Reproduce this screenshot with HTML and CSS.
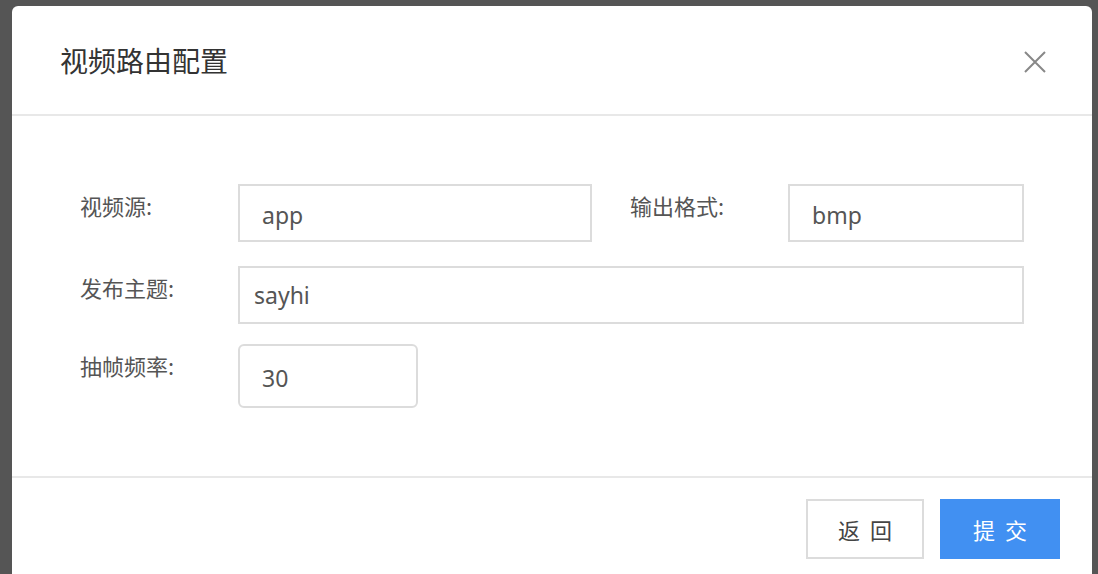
FILE: index.html
```html
<!DOCTYPE html>
<html lang="zh-CN">
<head>
<meta charset="utf-8">
<title>视频路由配置</title>
<link rel="stylesheet" href="styles.css">
</head>
<body>
<div class="modal">
  <div class="modal-header">
    <h2 class="modal-title">视频路由配置</h2>
    <button class="close" aria-label="关闭">
      <svg width="22" height="22" viewBox="0 0 22 22"><path d="M1 1 L21 21 M21 1 L1 21" stroke="#888" stroke-width="2" fill="none"/></svg>
    </button>
  </div>
  <div class="modal-body">
    <div class="row">
      <label class="label">视频源:</label>
      <div class="input w354">app</div>
      <label class="label">输出格式:</label>
      <div class="input w236">bmp</div>
    </div>
    <div class="row">
      <label class="label">发布主题:</label>
      <div class="input w786 tight">sayhi</div>
    </div>
    <div class="row last">
      <label class="label">抽帧频率:</label>
      <div class="input w180 round">30</div>
    </div>
  </div>
  <div class="modal-footer">
    <button class="btn btn-default">返回</button>
    <button class="btn btn-primary">提交</button>
  </div>
</div>
</body>
</html>
```
FILE: styles.css
```css
html, body {
  margin: 0;
  padding: 0;
}
body {
  background: #555555;
  width: 1098px;
  height: 574px;
  overflow: hidden;
  padding: 6px 6px 0 12px;
  box-sizing: border-box;
  font-family: "Noto Sans CJK SC", "Noto Sans", sans-serif;
}
.modal {
  width: 1080px;
  height: 568px;
  background: #fff;
  border-radius: 6px 6px 0 0;
}
.modal-header {
  height: 108px;
  border-bottom: 2px solid #e8e8e8;
  display: flex;
  align-items: center;
  justify-content: space-between;
  padding: 0 46px 0 48px;
}
.modal-title {
  margin: 0;
  font-size: 28px;
  font-weight: 400;
  color: #333;
  line-height: 32px;
}
.close {
  background: none;
  border: 0;
  padding: 0;
  width: 22px;
  height: 22px;
  margin-top: 4px;
  display: block;
}
.close svg { display: block; }
.modal-body {
  padding: 68px 0 68px 68px;
  display: flex;
  flex-direction: column;
  gap: 24px;
}
.row {
  display: flex;
  align-items: flex-start;
}
.row.last { margin-top: -4px; }
.label {
  width: 158px;
  font-size: 22px;
  line-height: 30px;
  padding-top: 6px;
  color: #555;
  flex: none;
}
.input {
  height: 58px;
  box-sizing: border-box;
  border: 2px solid #dcdcdc;
  padding: 4px 22px 0;
  font-family: "Noto Sans", "Noto Sans CJK SC", sans-serif;
  font-size: 23px;
  color: #555;
  display: flex;
  align-items: center;
  flex: none;
}
.input.tight { padding-left: 14px; padding-top: 0; }
.w354 { width: 354px; margin-right: 38px; }
.w236 { width: 236px; }
.w786 { width: 786px; }
.w180 { width: 180px; height: 64px; border-radius: 6px; }
.modal-footer {
  border-top: 2px solid #e8e8e8;
  padding: 21px 32px 0 0;
  display: flex;
  justify-content: flex-end;
  gap: 16px;
}
.btn {
  height: 60px;
  font-family: "Noto Sans CJK SC", sans-serif;
  font-size: 22px;
  letter-spacing: 10px;
  text-indent: 10px;
  padding: 0;
  box-sizing: border-box;
}
.btn-default {
  width: 118px;
  background: #fff;
  border: 2px solid #dcdcdc;
  color: #444;
}
.btn-primary {
  width: 120px;
  background: #4190f2;
  border: 0;
  color: #fff;
}
```
